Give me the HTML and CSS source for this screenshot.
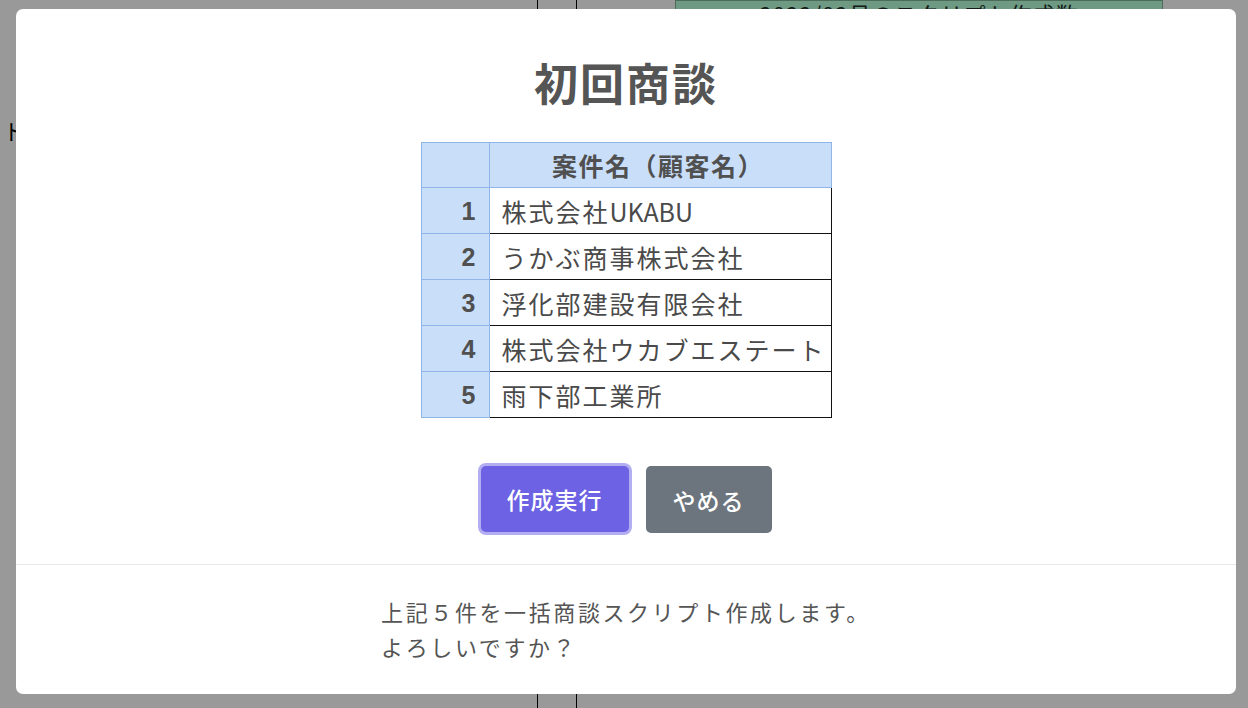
FILE: index.html
```html
<!DOCTYPE html>
<html lang="ja">
<head>
<meta charset="utf-8">
<title>初回商談</title>
<link rel="stylesheet" href="styles.css">
</head>
<body>
<div class="page">
  <div class="page-left">ト</div>
  <div class="page-col"></div>
  <div class="page-stat">2022/02月のスクリプト作成数</div>
</div>
<div class="backdrop"></div>
<div class="modal">
  <div class="modal-body">
    <h1 class="modal-title">初回商談</h1>
    <table class="cases">
      <thead>
        <tr><th class="num-head"></th><th class="name-head">案件名（顧客名）</th></tr>
      </thead>
      <tbody>
        <tr><td class="num">1</td><td class="name">株式会社<span class="latin">UKABU</span></td></tr>
        <tr><td class="num">2</td><td class="name">うかぶ商事株式会社</td></tr>
        <tr><td class="num">3</td><td class="name">浮化部建設有限会社</td></tr>
        <tr><td class="num">4</td><td class="name">株式会社ウカブエステート</td></tr>
        <tr><td class="num">5</td><td class="name">雨下部工業所</td></tr>
      </tbody>
    </table>
    <div class="actions">
      <button class="btn btn-primary">作成実行</button>
      <button class="btn btn-secondary">やめる</button>
    </div>
  </div>
  <div class="modal-footer">
    <p class="confirm">上記５件を一括商談スクリプト作成します。<br>よろしいですか？</p>
  </div>
</div>
</body>
</html>
```

FILE: styles.css
```css
html, body {
  margin: 0;
  padding: 0;
  width: 1248px;
  height: 708px;
  overflow: hidden;
  font-family: "Noto Sans CJK JP", "Noto Sans", sans-serif;
}

.page {
  display: flex;
  align-items: flex-start;
  height: 708px;
  background: #ffffff;
  color: #000;
}

.page-left {
  width: 537px;
  font-size: 22px;
  line-height: 1;
  padding-top: 119px;
  text-indent: 3px;
  box-sizing: border-box;
}

.page-col {
  width: 38px;
  height: 708px;
  border-left: 1px solid #000;
  border-right: 1px solid #000;
}

.page-stat {
  margin-left: 98px;
  width: 486px;
  height: 40px;
  background: #b8ffd9;
  border: 1px solid #7fb294;
  color: #203028;
  font-size: 22px;
  line-height: 1;
  padding-top: 1px;
  text-align: center;
  letter-spacing: 1px;
}

.backdrop {
  position: fixed;
  inset: 0;
  background: rgba(0, 0, 0, 0.4);
}

.modal {
  position: fixed;
  left: 16px;
  top: 9px;
  width: 1220px;
  height: 685px;
  background: #fff;
  border-radius: 7px;
  display: flex;
  flex-direction: column;
  color: #555;
}

.modal-body {
  display: flex;
  flex-direction: column;
  align-items: center;
  padding: 47px 0 31px;
  border-bottom: 1px solid #e8e8e8;
}

.modal-title {
  margin: 0;
  font-size: 44px;
  line-height: 53px;
  font-weight: 700;
  letter-spacing: 2px;
  color: #555;
}

.cases {
  margin-top: 33px;
  border-collapse: collapse;
  font-size: 25px;
  color: #4a4a4a;
}

.cases th,
.cases td {
  padding: 0;
  height: 45px;
  box-sizing: border-box;
  line-height: 1.2;
}

.cases tbody td {
  height: 46px;
}

.num-head,
.num {
  width: 68px;
  background: #c9def9;
  border: 1px solid #8fb5ea;
}

.name-head {
  width: 342px;
  background: #c9def9;
  border: 1px solid #8fb5ea;
  font-weight: 700;
  text-align: center;
  letter-spacing: 1.5px;
  padding-right: 4px !important;
  color: #505050;
}

.num {
  text-align: right;
  padding-right: 13px !important;
  font-weight: 700;
  font-family: "Liberation Sans", "Noto Sans CJK JP", sans-serif;
  font-size: 25px;
  color: #505050;
}

.name {
  background: #fff;
  border: 1px solid #111;
  padding-left: 12px !important;
  letter-spacing: 2px;
  white-space: nowrap;
}

.latin {
  letter-spacing: 0;
}

.actions {
  margin-top: 48px;
  display: flex;
  gap: 17px;
}

.btn {
  height: 66px;
  border: none;
  border-radius: 5px;
  color: #fff;
  font-family: "Noto Sans CJK JP", sans-serif;
  font-size: 23px;
  font-weight: 500;
  letter-spacing: 1px;
  padding: 0 24px;
}

.btn-primary {
  width: 148px;
  background: #6c62e3;
  box-shadow: 0 0 0 3px #b3aef2;
}

.btn-secondary {
  width: 126px;
  height: 67px;
  background: #6c757d;
}

.modal-footer {
  display: flex;
  justify-content: center;
  padding-top: 29px;
}

.confirm {
  margin: 0;
  font-size: 22px;
  line-height: 35px;
  letter-spacing: 2.6px;
  color: #555;
}
```
